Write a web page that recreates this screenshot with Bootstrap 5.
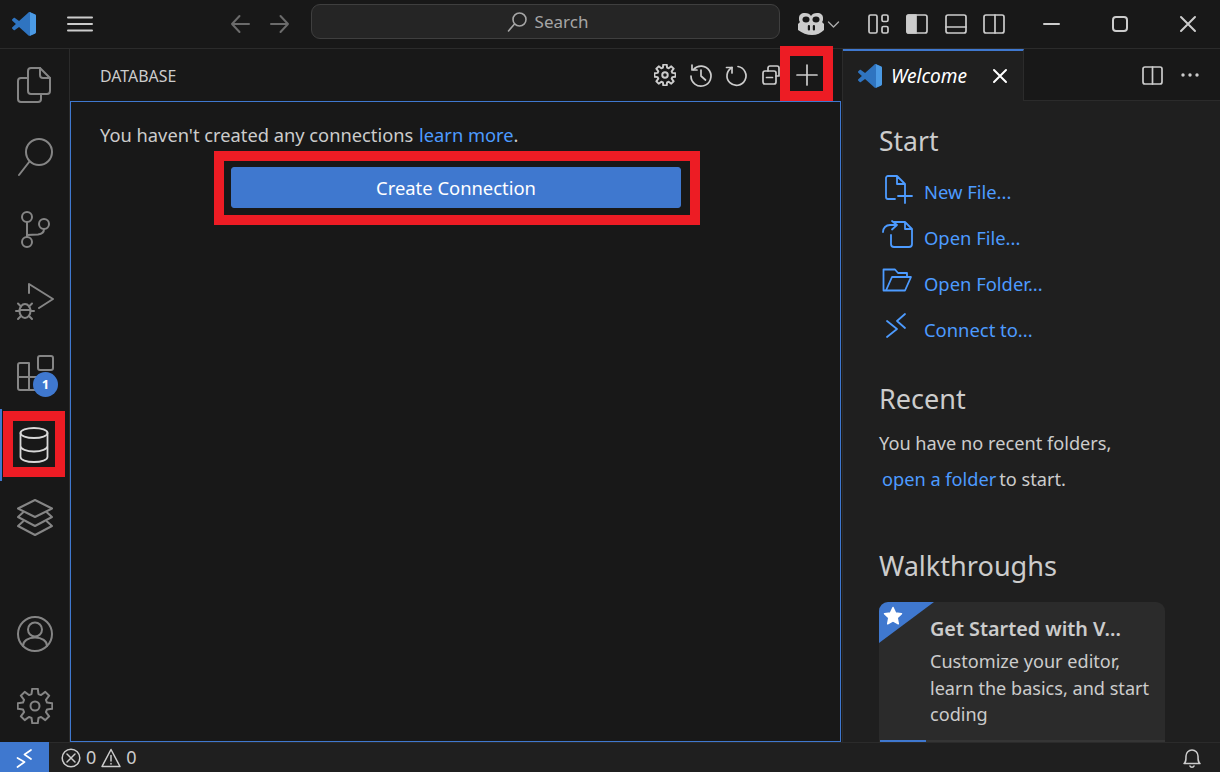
<!DOCTYPE html>
<html lang="en">
<head>
<meta charset="utf-8">
<title>Database - Visual Studio Code</title>
<link href="https://cdn.jsdelivr.net/npm/bootstrap@5.3.0/dist/css/bootstrap.min.css" rel="stylesheet">
<style>
html,body{height:100%;margin:0;background:#181818;overflow:hidden}
body{font-family:"Noto Sans","Open Sans",sans-serif;color:#ccc;font-size:18px}
svg{display:block;overflow:visible;fill:none;stroke:currentColor;stroke-linecap:round;stroke-linejoin:round}
.shell{height:772px;width:1220px}
.titlebar{height:49px;flex:none;border-bottom:1px solid #2b2b2b;background:#181818}
.slot-logo{width:48px}.slot-menu{width:64px;margin-right:108px}
.slot-nav{width:40px;color:#6b6b6b}
.searchbox{width:469px;height:35px;margin:0 18px 5px 11px;padding-left:4px;background:#252525;border:1px solid #3f3f3f;border-radius:9px;color:#a6a6a6;font-size:17px}
.slot-copilot{width:61px;color:#ccc}
.slot-layout{width:38.5px;color:#ccc}
.slot-win{width:68px;height:48px;color:#ccc}
.slot-win-last{margin-right:-2px}
.workbench{min-height:0}
.activity{width:70px;flex:none;border-right:1px solid #2b2b2b;color:#858585;background:#181818}
.act-item{height:72px;flex:none}
.act-active{color:#d8d8d8;border-left:2px solid #3f78cf}
.act-active svg{margin-right:3px}
.hl-frame{position:absolute;border:10px solid #ed1c24;pointer-events:none;z-index:5}
.hl-act{top:2px;left:1px;right:4px;bottom:4px}
.hl-plus{top:-3px;left:-10px;right:-8px;bottom:0}
.hl-btn{top:-16px;left:-17px;right:-19px;bottom:-17px}
.act-badge{position:absolute;left:33px;top:35px;width:25px;height:25px;border-radius:50%;background:#3f78cf;color:#fff;font:700 13px/25px "Noto Sans",sans-serif;text-align:center}
.sidepane{width:772px;flex:none;background:#181818}
.pane-head{height:52px;flex:none;padding-right:17px;padding-left:30px}
.pane-title{font-size:15.9px;color:#ccc;padding-top:4px}
.pane-tool{width:35.5px;height:52px;color:#ccc}
.pane-body{flex:1;border:1px solid #3f78cf;padding:19px 28px 0 29px;margin-right:1px}
.pane-msg{font-size:18.3px;line-height:27px;margin-bottom:19px}
.pane-msg .blue-link{margin-left:1px}
.blue-link{color:#4d9bff;text-decoration:none}
.cta-wrap{width:450px;margin:0 auto}
.cta{height:41px;background:#3f78cf;border:1px solid #3f78cf;color:#fff;border-radius:3px;font-size:18.4px;line-height:1;padding:1px 0 0}
.editor{flex:1;min-width:0;background:#1f1f1f;border-left:1px solid #2b2b2b}
.tabs-row{height:52px;flex:none;background:#181818;border-bottom:1px solid #2b2b2b}
.tab-on{width:181px;height:52px;background:#1f1f1f;border-top:2px solid #3f78cf;border-right:1px solid #2b2b2b;padding-left:15px;margin-bottom:-1px;color:#fff;font-style:italic;font-size:19.1px}
.tab-label{margin-left:9px;margin-right:26px}
.tab-tool{width:38px;color:#ccc}
.tab-tool-last{margin-right:11px}
.welcome{flex:1;overflow:hidden;padding-left:36px;min-height:0}
.wel-h{font-size:26.5px;font-weight:400;color:#ccc;margin:0;line-height:36px}
.start-h{margin-top:22px;margin-bottom:10px}
.start-row{height:46px;flex:none;font-size:18.4px}
.start-ico{width:45px;color:#4d9bff;flex:none}
.recent-h{margin-top:28px;margin-bottom:8px;font-size:27px}
.para{font-size:18.2px;line-height:36px}
.para .blue-link{margin-left:3px;margin-right:3px}
.walk-h{margin-top:51px;margin-bottom:18px;font-size:27.1px}
.walk-card{width:286px;height:170px;flex:none;background:#2b2b2b;border:0;border-radius:9px;color:#ccc;padding:13px 12px 0 51px;overflow:hidden}
.corner{position:absolute;left:0;top:0;width:55px;height:41px;background:#3f78cf;clip-path:polygon(0 0,100% 0,0 100%)}
.corner-star{position:absolute;left:4px;top:4px;width:20px;height:20px;fill:#fff;stroke:#fff}
.walk-title{font-size:19.8px;font-weight:600;line-height:27px;margin-bottom:6px;white-space:nowrap}
.walk-desc{font-size:18.1px;line-height:26.5px}
.walk-progress{position:absolute;left:1px;right:0;top:138px;height:2px;background:#353535;border-radius:0}
.walk-progress .progress-bar{background:#3f78cf}
.statusbar{height:30px;flex:none;background:#1f1f1f;border-top:1px solid #2b2b2b;color:#ccc;font-size:18px}
.st-remote{width:49px;height:30px;background:#3f78cf;color:#fff;margin-top:-1px}
.st-probs{margin-left:12px;gap:5px}
.st-bell{margin-right:19px}
</style>
</head>
<body>
<svg width="0" height="0" style="position:absolute">
  <defs>
    <symbol id="vs" viewBox="0 0 100 100">
      <path style="fill:#2f74c0;stroke:none" d="M70.9 99.3c1.6.6 3.4.6 5-.2l20.6-9.9c2.1-1 3.5-3.2 3.5-5.6V16.4c0-2.4-1.4-4.6-3.5-5.6L75.9.9c-2.1-1-4.5-.8-6.4.6-.3.2-.5.4-.7.6L29.4 38 12.2 25c-1.6-1.2-3.8-1.1-5.3.2l-5.5 5c-1.8 1.7-1.8 4.5 0 6.2L16.2 50 1.4 63.6c-1.8 1.6-1.8 4.5 0 6.1l5.5 5c1.5 1.4 3.7 1.5 5.3.3L29.4 62l39.4 35.9c.6.6 1.3 1.1 2.1 1.4zM75 27.3 45.1 50 75 72.7V27.3z"/>
      <path style="fill:#4b9ae4;stroke:none" d="M75 .6 96.5 10.8c2.1 1 3.5 3.2 3.5 5.6v67.2c0 2.4-1.4 4.6-3.5 5.6L75 99.4z"/>
    </symbol>
    <symbol id="gear" viewBox="0 0 36 36">
      <path d="M20.74.72 21.45 5.98 24.06 7.07 28.29 3.84 32.16 7.71 28.93 11.94 30.02 14.55 35.28 15.26V20.74L30.02 21.45 28.93 24.06 32.16 28.29 28.29 32.16 24.06 28.93 21.45 30.02 20.74 35.28H15.26L14.55 30.02 11.94 28.93 7.71 32.16 3.84 28.29 7.07 24.06 5.98 21.45.72 20.74V15.26L5.98 14.55 7.07 11.94 3.84 7.71 7.71 3.84 11.94 7.07 14.55 5.98 15.26.72Z"/>
      <circle cx="18" cy="18" r="4.5"/>
    </symbol>
  </defs>
</svg>

<div class="shell d-flex flex-column">
  <header class="titlebar d-flex align-items-center">
    <div class="slot-logo d-flex justify-content-center"><svg width="24" height="24"><use href="#vs"/></svg></div>
    <div class="slot-menu d-flex justify-content-center">
      <svg width="26" height="16" stroke-width="2"><path d="M1 1.5H25M1 8H25M1 14.5H25"/></svg>
    </div>
    <div class="slot-nav d-flex justify-content-center"><svg width="20" height="18" stroke-width="2"><path d="M19 9H2M9.5 1 2 9l7.5 8"/></svg></div>
    <div class="slot-nav d-flex justify-content-center"><svg width="20" height="18" stroke-width="2"><path d="M1 9H18M10.5 1 18 9l-7.5 8"/></svg></div>
    <div class="searchbox d-flex align-items-center justify-content-center gap-2">
      <svg width="20" height="20" stroke-width="1.6"><circle cx="12.5" cy="7.5" r="6.5"/><path d="M7.5 12 1.5 19"/></svg>
      <span>Search</span>
    </div>
    <div class="slot-copilot d-flex align-items-center gap-1">
      <svg width="26" height="22" style="stroke:none;fill:#ccc"><path d="M7 0c3 0 5 1 6 3 1-2 3-3 6-3 4 0 6 2 6 5 0 2 0 3-1 4l2 2v6c-3 3-7 5-12 5S4 20 0 17v-6l2-2C1 8 1 7 1 5c0-3 2-5 6-5z"/><ellipse style="fill:#181818" cx="8" cy="6.500" rx="3.500" ry="3"/><ellipse style="fill:#181818" cx="18" cy="6.500" rx="3.500" ry="3"/><rect style="fill:#181818" x="9.800" y="12" width="2.200" height="5.500" rx="1"/><rect style="fill:#181818" x="14.800" y="12" width="2.200" height="5.500" rx="1"/></svg>
      <svg width="11" height="7" stroke-width="1.4" style="color:#aaa"><path d="M.5 1 5.500 6l5-5"/></svg>
    </div>
    <div class="slot-layout d-flex justify-content-center"><svg width="21" height="20" stroke-width="1.7"><rect x="1" y="1" width="8" height="18" rx="1.500"/><rect x="14" y="1" width="6" height="6.500" rx="1.500"/><rect x="14" y="12.500" width="6" height="6.500" rx="1.500"/></svg></div>
    <div class="slot-layout d-flex justify-content-center"><svg width="21" height="20" stroke-width="1.7"><path d="M2.500 1H10V19H2.500A1.500 1.500 0 0 1 1 17.500V2.500A1.500 1.500 0 0 1 2.500 1Z" style="fill:#ccc"/><rect x="1" y="1" width="20" height="18" rx="2"/></svg></div>
    <div class="slot-layout d-flex justify-content-center"><svg width="21" height="20" stroke-width="1.7"><rect x="1" y="1" width="20" height="18" rx="2"/><path d="M1 13H21"/></svg></div>
    <div class="slot-layout d-flex justify-content-center"><svg width="21" height="20" stroke-width="1.7"><rect x="1" y="1" width="20" height="18" rx="2"/><path d="M12 1V19"/></svg></div>
    <div class="flex-grow-1"></div>
    <div class="slot-win d-flex align-items-center justify-content-center"><svg width="16" height="2" stroke-width="2"><path d="M0 1H15"/></svg></div>
    <div class="slot-win d-flex align-items-center justify-content-center"><svg width="16" height="16" stroke-width="2"><rect x="1" y="1" width="14" height="14" rx="3"/></svg></div>
    <div class="slot-win slot-win-last d-flex align-items-center justify-content-center"><svg width="16" height="16" stroke-width="2"><path d="M1 1 15 15M15 1 1 15"/></svg></div>
  </header>

  <div class="workbench d-flex flex-grow-1">
    <nav class="activity d-flex flex-column">
      <div class="act-item d-flex align-items-center justify-content-center"><svg width="36" height="36" stroke-width="2"><path d="M11 11H4a3 3 0 0 0-3 3v18a3 3 0 0 0 3 3h17a3 3 0 0 0 3-3v-5"/><path d="M14 1h9l10 10v13a3 3 0 0 1-3 3H14a3 3 0 0 1-3-3V4a3 3 0 0 1 3-3z"/><path d="M23 1v7a3 3 0 0 0 3 3h7"/></svg></div>
      <div class="act-item d-flex align-items-center justify-content-center"><svg width="36" height="36" stroke-width="2"><circle cx="22" cy="13" r="13"/><path d="M12.500 22.500 2 36"/></svg></div>
      <div class="act-item d-flex align-items-center justify-content-center"><svg width="36" height="36" stroke-width="2"><circle cx="10" cy="6" r="5"/><circle cx="10" cy="31" r="5"/><circle cx="27" cy="13" r="5"/><path d="M10 11V26M27 18c0 3-2 5-6 5.500L10 24"/></svg></div>
      <div class="act-item d-flex align-items-center justify-content-center"><svg width="36" height="36" stroke-width="2"><path d="M12 10V1L36 16 22 25"/><ellipse cx="8" cy="28" rx="5.500" ry="7"/><path d="M2.500 27H13.500M1 20.500l3 3M15 20.500l-3 3M-1 28H2.500M17 28h-3.500M1 36l3-3M15 36l-3-3"/></svg></div>
      <div class="act-item position-relative d-flex align-items-center justify-content-center">
        <svg width="36" height="36" stroke-width="2"><path d="M12 8H3a2 2 0 0 0-2 2v23a2 2 0 0 0 2 2h19a2 2 0 0 0 2-2V22H1M12 8V35"/><rect x="21" y="1" width="15" height="14" rx="2"/></svg>
        <span class="act-badge">1</span>
      </div>
      <div class="act-item act-active position-relative d-flex align-items-center justify-content-center">
        <svg width="36" height="36" stroke-width="1.800"><ellipse cx="18" cy="6" rx="13.500" ry="5"/><path d="M4.500 6V30c0 2.800 6 5 13.500 5s13.500-2.200 13.500-5V6M4.500 19c0 3 6 5.500 13.500 5.500S31.500 22 31.500 19"/></svg>
        <span class="hl-frame hl-act"></span>
      </div>
      <div class="act-item d-flex align-items-center justify-content-center"><svg width="36" height="36" stroke-width="2"><path d="M18 1 35 9.500 18 18 1 9.500Z"/><path d="M6 13.500 1 18l17 9 17-9-5-4.500"/><path d="M6 22.500 1 27l17 9 17-9-5-4.500"/></svg></div>
      <div class="flex-grow-1"></div>
      <div class="act-item d-flex align-items-center justify-content-center"><svg width="36" height="36" stroke-width="2"><circle cx="18" cy="18" r="17"/><circle cx="18" cy="13.500" r="7"/><path d="M6 30c0-5 5-8.500 12-8.500S30 25 30 30"/></svg></div>
      <div class="act-item d-flex align-items-center justify-content-center"><svg width="36" height="36" stroke-width="2"><use href="#gear"/></svg></div>
    </nav>

    <section class="sidepane d-flex flex-column">
      <div class="pane-head d-flex align-items-center">
        <span class="pane-title flex-grow-1">DATABASE</span>
        <div class="pane-tool d-flex align-items-center justify-content-center"><svg width="22" height="22" stroke-width="3.200" viewBox="0 0 36 36"><use href="#gear"/></svg></div>
        <div class="pane-tool d-flex align-items-center justify-content-center"><svg width="22" height="22" stroke-width="1.700"><path d="M3.500 5.500A10 10 0 1 1 1 12"/><path d="M2 1V6H7M11 6V12L15.500 16"/></svg></div>
        <div class="pane-tool d-flex align-items-center justify-content-center"><svg width="22" height="22" stroke-width="1.700"><path d="M7 3.500A9.500 9.500 0 1 0 13 2.500"/><path d="M7 9V3.500H1.500"/></svg></div>
        <div class="pane-tool d-flex align-items-center justify-content-center"><svg width="20" height="20" stroke-width="1.700"><rect x="1" y="6" width="13" height="13" rx="2"/><path d="M6 6V3a2 2 0 0 1 2-2h7a2 2 0 0 1 2 2v8h-3M4.500 12.500h6"/></svg></div>
        <div class="pane-tool position-relative d-flex align-items-center justify-content-center"><svg width="20" height="20" stroke-width="1.700"><path d="M10 0V20M0 10H20"/></svg><span class="hl-frame hl-plus"></span></div>
      </div>
      <div class="pane-body">
        <p class="pane-msg">You haven't created any connections <a class="blue-link" href="#">learn more</a>.</p>
        <div class="cta-wrap position-relative">
          <button type="button" class="btn btn-primary cta w-100">Create Connection</button>
          <span class="hl-frame hl-btn"></span>
        </div>
      </div>
    </section>

    <main class="editor d-flex flex-column">
      <div class="tabs-row d-flex align-items-stretch">
        <div class="tab-on d-flex align-items-center">
          <svg width="24" height="24"><use href="#vs"/></svg>
          <span class="tab-label">Welcome</span>
          <svg width="14" height="14" stroke-width="2" style="color:#fff"><path d="M1 1 13 13M13 1 1 13"/></svg>
        </div>
        <div class="flex-grow-1"></div>
        <div class="tab-tool d-flex align-items-center justify-content-center"><svg width="20" height="18" stroke-width="1.700"><rect x="1" y="1" width="19" height="17" rx="2"/><path d="M10.500 1V18"/></svg></div>
        <div class="tab-tool tab-tool-last d-flex align-items-center justify-content-center"><svg width="18" height="4" style="fill:#ccc;stroke:none"><circle cx="2" cy="2" r="1.700"/><circle cx="9" cy="2" r="1.700"/><circle cx="16" cy="2" r="1.700"/></svg></div>
      </div>
      <div class="welcome d-flex flex-column">
        <h2 class="wel-h start-h">Start</h2>
        <a class="start-row blue-link d-flex align-items-center" href="#">
          <span class="start-ico"><svg width="30" height="30" stroke-width="1.800"><path d="M7 20V1a2 2 0 0 1 2-2H18l8 8v5M18-1v8h8M7 20a2 2 0 0 0 2 2h7M26 12V26M19 19H33"/></svg></span>New File...
        </a>
        <a class="start-row blue-link d-flex align-items-center" href="#">
          <span class="start-ico"><svg width="30" height="30" stroke-width="1.800"><path d="M12 12V21a3 3 0 0 0 3 3h15a3 3 0 0 0 3-3V6l-7-7H15M26-1v7h7M4 9c0-4 3-7 7-7h7M13-2l5 4-5 4.500"/></svg></span>Open File...
        </a>
        <a class="start-row blue-link d-flex align-items-center" href="#">
          <span class="start-ico"><svg width="30" height="30" stroke-width="1.800"><path d="M4.500 21.500V.5H16l3 3.500h9v4M4.500 21.500H26L32 8H13L7 21.500"/></svg></span>Open Folder...
        </a>
        <a class="start-row blue-link d-flex align-items-center" href="#">
          <span class="start-ico"><svg width="30" height="30" stroke-width="1.800"><path d="M8 6 18 14 8 22M26-1 18 6 26 13"/></svg></span>Connect to...
        </a>
        <h2 class="wel-h recent-h">Recent</h2>
        <div class="para">You have no recent folders,</div>
        <div class="para"><a class="blue-link" href="#">open a folder</a>to start.</div>
        <h2 class="wel-h walk-h">Walkthroughs</h2>
        <div class="card walk-card position-relative">
          <span class="corner"></span>
          <svg class="corner-star" viewBox="0 0 20 20" stroke-width="1.500"><path d="M10 1.500 12.600 7 18.500 7.700 14.200 11.800 15.300 17.800 10 14.900 4.700 17.800 5.800 11.800 1.500 7.700 7.400 7Z"/></svg>
          <div class="walk-title">Get Started with V...</div>
          <div class="walk-desc">Customize your editor, learn the basics, and start coding</div>
          <div class="progress walk-progress"><div class="progress-bar" style="width:46px"></div></div>
        </div>
      </div>
    </main>
  </div>

  <footer class="statusbar d-flex align-items-center">
    <div class="st-remote d-flex align-items-center justify-content-center"><svg width="16" height="18" stroke-width="1.700"><path d="M.5 10l7 4-7 5M14 2 7.500 6.500 14 11"/></svg></div>
    <div class="st-probs d-flex align-items-center">
      <svg width="20" height="20" stroke-width="1.500"><circle cx="10" cy="10" r="8.800"/><path d="M6 6 14 14M14 6 6 14"/></svg><span>0</span>
      <svg width="20" height="20" stroke-width="1.500"><path d="M10 1.500 19 18.500H1Z"/><path d="M10 7.500V13M10 15.500V16"/></svg><span>0</span>
    </div>
    <div class="flex-grow-1"></div>
    <div class="st-bell"><svg width="18" height="20" stroke-width="1.500"><path d="M1 15.500c2-1.500 2-3 2-7.500a6 6 0 0 1 12 0c0 4.500 0 6 2 7.500ZM7 18c.5 1.500 3.500 1.500 4 0"/></svg></div>
  </footer>
</div>
</body>
</html>
